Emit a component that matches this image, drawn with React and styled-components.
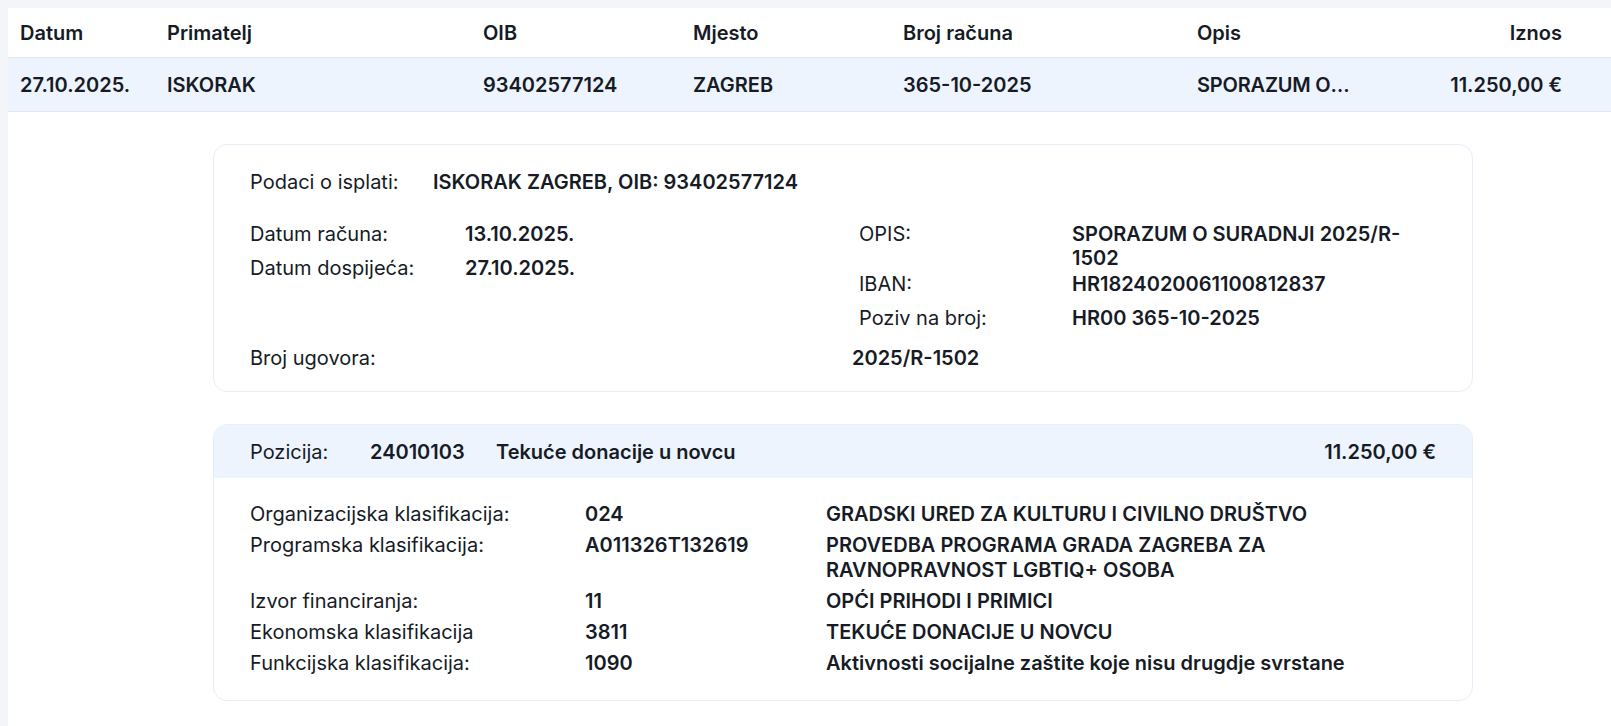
import styled, { createGlobalStyle } from 'styled-components';

const GlobalStyle = createGlobalStyle`
  html, body {
    margin: 0;
    background: #f3f5f9;
  }
  body {
    font-family: Inter, 'Noto Sans', sans-serif;
    color: #161b26;
    font-size: 20px;
  }
`;

const columns = [
  { key: 'datum', title: 'Datum', value: '27.10.2025.' },
  { key: 'primatelj', title: 'Primatelj', value: 'ISKORAK' },
  { key: 'oib', title: 'OIB', value: '93402577124' },
  { key: 'mjesto', title: 'Mjesto', value: 'ZAGREB' },
  { key: 'broj', title: 'Broj računa', value: '365-10-2025' },
  { key: 'opis', title: 'Opis', value: 'SPORAZUM O SURADNJI 2025/R-1502', clip: true },
  { key: 'iznos', title: 'Iznos', value: '11.250,00 €', right: true },
];

const classifications = [
  ['Organizacijska klasifikacija:', '024', 'GRADSKI URED ZA KULTURU I CIVILNO DRUŠTVO'],
  ['Programska klasifikacija:', 'A011326T132619', 'PROVEDBA PROGRAMA GRADA ZAGREBA ZA RAVNOPRAVNOST LGBTIQ+ OSOBA'],
  ['Izvor financiranja:', '11', 'OPĆI PRIHODI I PRIMICI'],
  ['Ekonomska klasifikacija', '3811', 'TEKUĆE DONACIJE U NOVCU'],
  ['Funkcijska klasifikacija:', '1090', 'Aktivnosti socijalne zaštite koje nisu drugdje svrstane'],
];

export default function App() {
  return (
    <Page>
      <GlobalStyle />
      <Panel>
        <HeaderRow>
          {columns.map((c) => (
            <HeadCell key={c.key} $right={c.right}>{c.title}</HeadCell>
          ))}
          <HeadCell />
        </HeaderRow>
        <DataRow>
          {columns.map((c) => (
            <DataCell key={c.key} $right={c.right} $clip={c.clip}>{c.value}</DataCell>
          ))}
          <DataCell />
        </DataRow>

        <Details>
          <Card>
            <PayeeRow>
              <Label $width="183px">Podaci o isplati:</Label>
              <Value>ISKORAK ZAGREB, OIB: 93402577124</Value>
            </PayeeRow>
            <InfoGrid>
              <InfoColumn>
                <InfoRow>
                  <Label $width="215px">Datum računa:</Label>
                  <Value>13.10.2025.</Value>
                </InfoRow>
                <InfoRow>
                  <Label $width="215px">Datum dospijeća:</Label>
                  <Value>27.10.2025.</Value>
                </InfoRow>
              </InfoColumn>
              <InfoColumn>
                <InfoRow $gap="2px">
                  <Label $width="213px">OPIS:</Label>
                  <WrapValue>SPORAZUM O SURADNJI 2025/R-1502</WrapValue>
                </InfoRow>
                <InfoRow>
                  <Label $width="213px">IBAN:</Label>
                  <Value>HR1824020061100812837</Value>
                </InfoRow>
                <InfoRow>
                  <Label $width="213px">Poziv na broj:</Label>
                  <Value>HR00 365-10-2025</Value>
                </InfoRow>
              </InfoColumn>
            </InfoGrid>
            <ContractRow>
              <Label $width="602px">Broj ugovora:</Label>
              <Value>2025/R-1502</Value>
            </ContractRow>
          </Card>

          <Card $flush>
            <PositionHeader>
              <Label $width="120px">Pozicija:</Label>
              <Value $width="126px">24010103</Value>
              <Value>Tekuće donacije u novcu</Value>
              <Amount>11.250,00 €</Amount>
            </PositionHeader>
            <ClassList>
              {classifications.map(([label, code, desc]) => (
                <ClassRow key={label}>
                  <Label>{label}</Label>
                  <Value>{code}</Value>
                  <Value>{desc}</Value>
                </ClassRow>
              ))}
            </ClassList>
          </Card>
        </Details>
      </Panel>
    </Page>
  );
}

const Page = styled.div`
  padding: 8px 0 0 8px;
  min-height: 100vh;
  box-sizing: border-box;
`;

const Panel = styled.div`
  background: #ffffff;
  min-height: calc(100vh - 8px);
`;

const gridColumns = '147px 316px 210px 210px 294px 172px 217px 1fr';

const HeaderRow = styled.div`
  display: grid;
  grid-template-columns: ${gridColumns};
  height: 49px;
  align-items: center;
  border-bottom: 1px solid #e2e8f0;
`;

const DataRow = styled(HeaderRow)`
  height: 53px;
  background: #edf4fd;
`;

const HeadCell = styled.div`
  padding: 0 12px;
  font-weight: 600;
  text-align: ${(p) => (p.$right ? 'right' : 'left')};
  white-space: nowrap;
  overflow: hidden;
  text-overflow: ellipsis;
`;

const DataCell = styled(HeadCell)`
  padding-right: ${(p) => (p.$clip ? '4px' : '12px')};
  letter-spacing: ${(p) => (p.$clip ? '-0.2px' : 'normal')};
`;

const Details = styled.div`
  display: flex;
  flex-direction: column;
  gap: 32px;
  width: 1260px;
  margin: 32px 0 0 205px;
  padding-bottom: 24px;
`;

const Card = styled.div`
  border: 1px solid #e6eef8;
  border-radius: 14px;
  overflow: hidden;
  padding: ${(p) => (p.$flush ? '0' : '25px 36px 21px')};
  line-height: 24px;
`;

const Label = styled.span`
  flex: none;
  width: ${(p) => p.$width || 'auto'};
  font-weight: 400;
`;

const Value = styled.span`
  flex: none;
  width: ${(p) => p.$width || 'auto'};
  font-weight: 600;
`;

const WrapValue = styled(Value)`
  width: 360px;
`;

const PayeeRow = styled.div`
  display: flex;
  margin-bottom: 28px;
`;

const InfoGrid = styled.div`
  display: grid;
  grid-template-columns: 609px 1fr;
  align-items: start;
`;

const InfoColumn = styled.div`
  display: flex;
  flex-direction: column;
`;

const InfoRow = styled.div`
  display: flex;
  margin-bottom: ${(p) => p.$gap || '10px'};
`;

const ContractRow = styled.div`
  display: flex;
  margin-top: 6px;
`;

const PositionHeader = styled.div`
  display: flex;
  align-items: center;
  height: 53px;
  padding: 0 36px;
  background: #edf4fd;
`;

const Amount = styled.span`
  margin-left: auto;
  font-weight: 600;
`;

const ClassList = styled.div`
  display: flex;
  flex-direction: column;
  gap: 6px;
  padding: 24px 36px 24px;
`;

const ClassRow = styled.div`
  display: grid;
  grid-template-columns: 335px 241px 560px;
  line-height: 25px;
`;
